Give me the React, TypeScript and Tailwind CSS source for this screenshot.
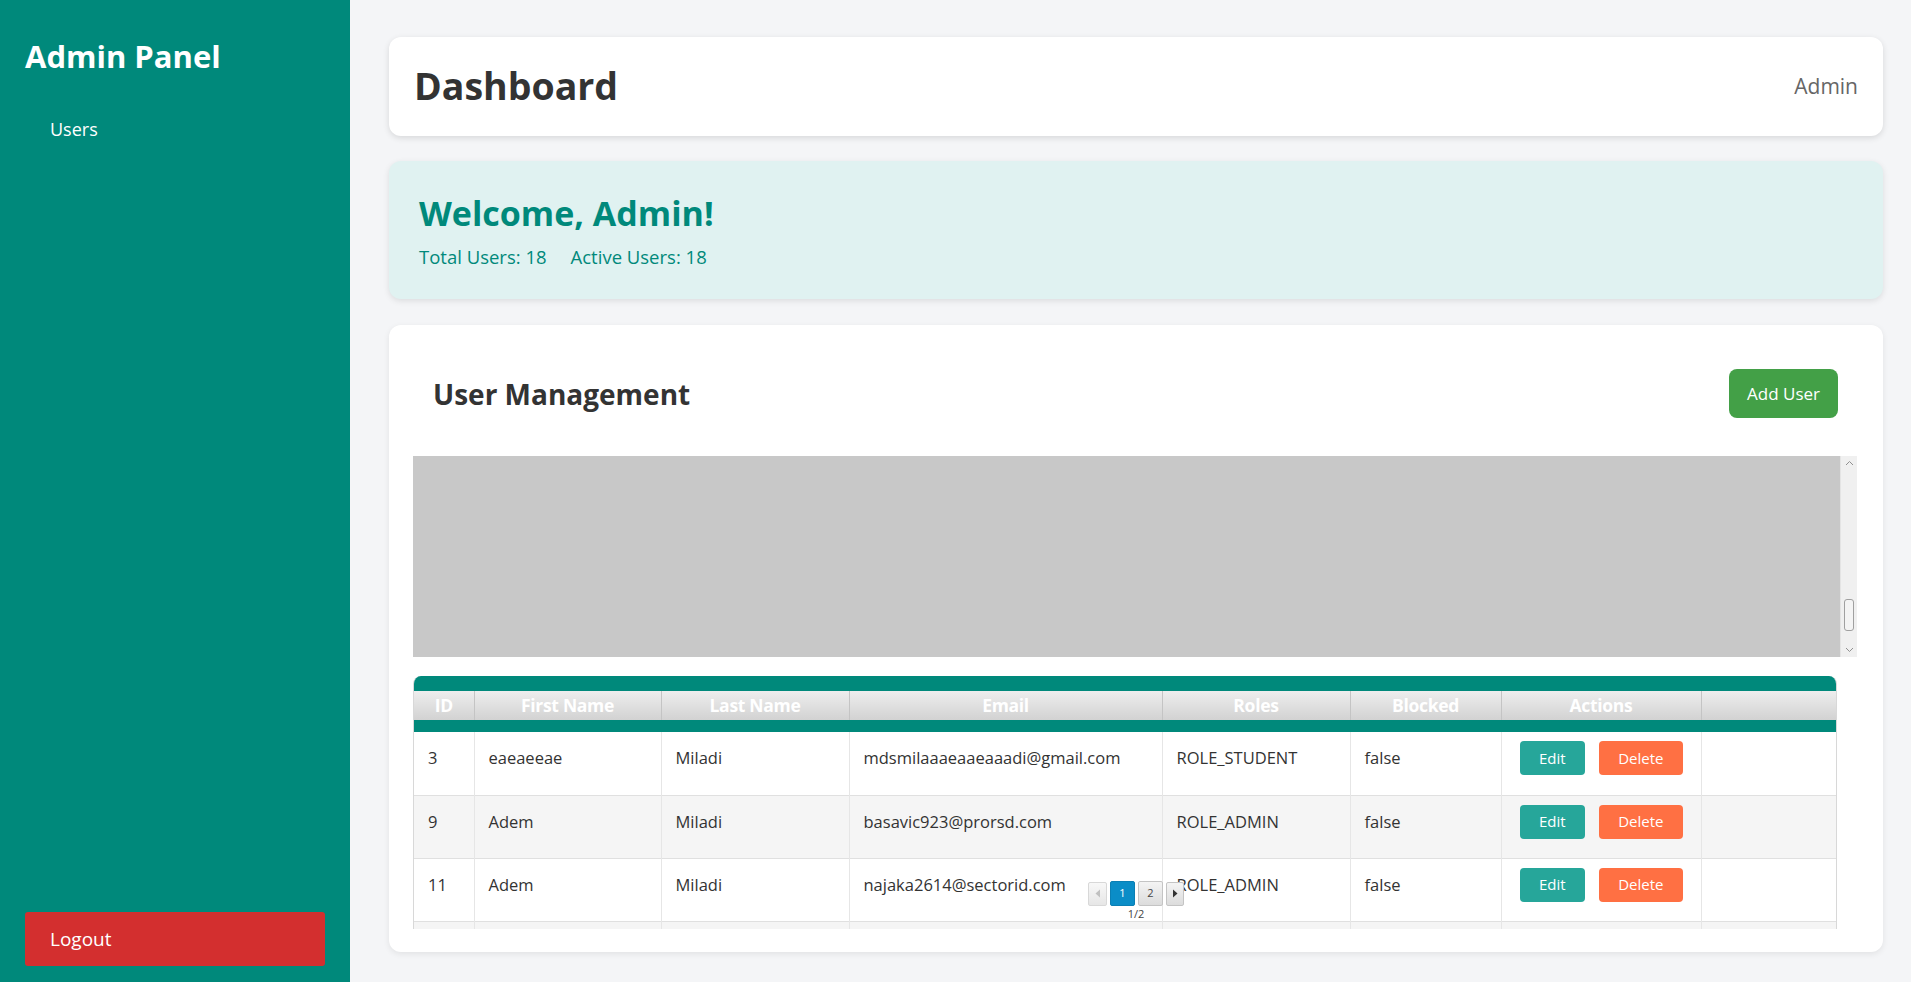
import React from "react";

const cols = [60, 187, 188, 313, 188, 151, 200, 137];
const headers = ["ID", "First Name", "Last Name", "Email", "Roles", "Blocked", "Actions", ""];
const rows = [
  { id: "3", first: "eaeaeeae", last: "Miladi", email: "mdsmilaaaeaaeaaadi@gmail.com", role: "ROLE_STUDENT", blocked: "false" },
  { id: "9", first: "Adem", last: "Miladi", email: "basavic923@prorsd.com", role: "ROLE_ADMIN", blocked: "false" },
  { id: "11", first: "Adem", last: "Miladi", email: "najaka2614@sectorid.com", role: "ROLE_ADMIN", blocked: "false" },
];

const cell = "border-r border-[#e6e6e6] px-[14px] pt-[9px] align-top leading-[34px]";

export default function App() {
  return (
    <div
      className="flex h-[982px] w-full overflow-hidden"
      style={{ fontFamily: '"Open Sans", "Noto Sans", sans-serif' }}
    >
      {/* Sidebar */}
      <aside className="flex w-[350px] shrink-0 flex-col justify-between bg-[#00897b] px-[25px] pb-[16px]">
        <div>
          <h2 className="pt-[34px] text-[31px] font-bold leading-[44px] text-white">Admin Panel</h2>
          <div className="mt-[36px] pl-[25px] text-[18px] leading-[30px] text-white">Users</div>
        </div>
        <button className="flex h-[54px] w-[300px] items-center rounded-[3px] bg-[#d32f2f] pl-[25px] text-left text-[19px] text-white">
          Logout
        </button>
      </aside>

      {/* Main */}
      <main className="flex-1 bg-[#f4f5f7] pl-[39px] pr-[28px] pt-[37px]">
        {/* Header card */}
        <div className="flex h-[99px] items-center justify-between rounded-[12px] bg-white px-[25px] shadow-[0_2px_6px_rgba(0,0,0,0.12)]">
          <h1 className="text-[37.5px] font-bold text-[#333333]">Dashboard</h1>
          <span className="text-[21px] text-[#666666]">Admin</span>
        </div>

        {/* Welcome card */}
        <div className="mt-[25px] h-[138px] rounded-[12px] bg-[#e0f2f1] pl-[30px] pt-[31px] shadow-[0_2px_6px_rgba(0,0,0,0.10)]">
          <h2 className="text-[34px] font-bold leading-[42px] text-[#00897b]">Welcome, Admin!</h2>
          <div className="mt-[10px] flex gap-[24px] text-[18.5px] leading-[26px] text-[#00897b]">
            <span>Total Users: 18</span>
            <span>Active Users: 18</span>
          </div>
        </div>

        {/* User management card */}
        <div className="mt-[26px] h-[627px] rounded-[12px] bg-white pl-[24px] pr-[26px] pt-[44px] shadow-[0_2px_6px_rgba(0,0,0,0.08)]">
          <div className="flex h-[49px] items-center justify-between pl-[20px] pr-[19px]">
            <h2 className="text-[28px] font-bold text-[#333333]">User Management</h2>
            <button className="h-[49px] w-[109px] rounded-[8px] bg-[#43a047] text-[17px] text-white">Add User</button>
          </div>

          {/* gray scroll area */}
          <div className="mt-[38px] flex h-[201px]">
            <div className="flex-1 bg-[#c8c8c8]" />
            <div className="relative w-[17px] border-l border-[#e4e4e4] bg-[#f0f0f0]">
              <svg className="absolute left-[4px] top-[4px]" width="9" height="6" viewBox="0 0 9 6">
                <path d="M1 5 L4.5 1.5 L8 5" fill="none" stroke="#909090" strokeWidth="1" />
              </svg>
              <div className="absolute left-[3px] top-[143px] h-[32px] w-[10px] rounded-[3px] border border-[#a0a0a0] bg-[#f4f4f4]" />
              <svg className="absolute bottom-[4px] left-[4px]" width="9" height="6" viewBox="0 0 9 6">
                <path d="M1 1 L4.5 4.5 L8 1" fill="none" stroke="#909090" strokeWidth="1" />
              </svg>
            </div>
          </div>

          {/* table */}
          <div className="relative mt-[19px] h-[253px] w-[1424px] overflow-hidden rounded-t-[8px] border-x border-[#d8d8d8]">
            <div className="h-[15px] bg-[#00897b]" />
            <table className="w-[1424px] table-fixed border-collapse text-[16.5px] text-[#333333]">
              <colgroup>
                {cols.map((w, i) => (
                  <col key={i} style={{ width: w }} />
                ))}
              </colgroup>
              <thead>
                <tr className="h-[29px] bg-gradient-to-b from-[#eeeeee] to-[#d2d2d2]">
                  {headers.map((h, i) => (
                    <th
                      key={i}
                      className="border-x border-[#c4c4c4] p-0 text-center text-[17.5px] font-bold leading-[29px] tracking-[-0.3px] text-white first:border-l-0 last:border-r-0"
                    >
                      {h}
                    </th>
                  ))}
                </tr>
                <tr className="h-[12px] bg-[#00897b]">
                  <td colSpan={8} className="p-0" />
                </tr>
              </thead>
              <tbody>
                {rows.map((r, i) => (
                  <tr key={r.id} className={`h-[63px] border-b border-[#e0e0e0] ${i % 2 === 1 ? "bg-[#f5f5f5]" : "bg-white"}`}>
                    <td className={cell}>{r.id}</td>
                    <td className={cell}>{r.first}</td>
                    <td className={cell}>{r.last}</td>
                    <td className={cell}>{r.email}</td>
                    <td className={cell}>{r.role}</td>
                    <td className={cell}>{r.blocked}</td>
                    <td className="border-r border-[#e6e6e6] px-[18px] pt-[9px] align-top">
                      <div className="flex gap-[14px]">
                        <button className="h-[34px] w-[66px] rounded-[4px] bg-[#26a69a] text-[15px] text-white">Edit</button>
                        <button className="h-[34px] w-[84px] rounded-[4px] bg-[#ff7043] text-[15px] text-white">Delete</button>
                      </div>
                    </td>
                    <td />
                  </tr>
                ))}
                <tr className="h-[63px] bg-[#f5f5f5]">
                  {cols.map((_, i) => (
                    <td key={i} className={i < 7 ? "border-r border-[#e6e6e6]" : ""} />
                  ))}
                </tr>
              </tbody>
            </table>

            {/* pagination overlay */}
            <div className="absolute left-[674px] top-[205px] flex flex-col items-center">
              <div className="flex items-center gap-[3px]">
                <div className="flex h-[24px] w-[19px] items-center justify-center rounded-[2px] border border-[#d8d8d8] bg-gradient-to-b from-[#f8f8f8] to-[#e6e6e6]">
                  <svg width="6" height="9" viewBox="0 0 6 9"><path d="M5 0.5 L0.5 4.5 L5 8.5 Z" fill="#c0c0c0" /></svg>
                </div>
                <div className="flex h-[25px] w-[25px] items-center justify-center rounded-[2px] border border-[#0b7fb4] bg-[#0b8dc7] text-[11px] text-white">1</div>
                <div className="flex h-[25px] w-[25px] items-center justify-center rounded-[2px] border border-[#c4c4c4] bg-gradient-to-b from-[#f4f4f4] to-[#dcdcdc] text-[11px] text-[#444]">2</div>
                <div className="flex h-[24px] w-[18px] items-center justify-center rounded-[2px] border border-[#c4c4c4] bg-gradient-to-b from-[#f4f4f4] to-[#dcdcdc]">
                  <svg width="6" height="9" viewBox="0 0 6 9"><path d="M1 0.5 L5.5 4.5 L1 8.5 Z" fill="#333" /></svg>
                </div>
              </div>
              <div className="mt-[1px] text-[11px] leading-[14px] text-[#444]">1/2</div>
            </div>
          </div>
        </div>
      </main>
    </div>
  );
}
